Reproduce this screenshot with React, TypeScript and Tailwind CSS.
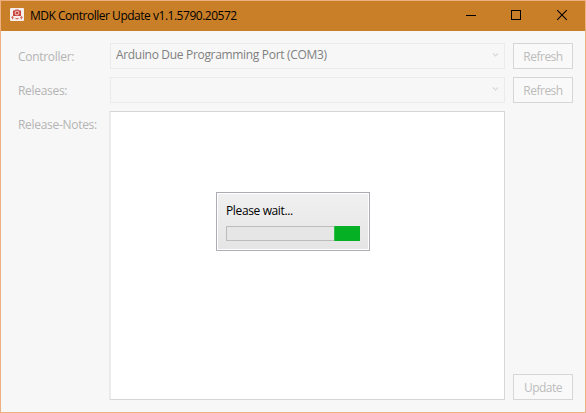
import React from "react";

function Chevron() {
  return (
    <svg width="7" height="6" viewBox="0 0 7 6" fill="none" className="mr-[-1px] mb-0.5 ml-auto shrink-0">
      <path d="M1 1.5 3.5 4 6 1.5" stroke="#dadada" strokeWidth="1.2" />
    </svg>
  );
}

function Label({ children }: { children: React.ReactNode }) {
  return <div className="w-[92px] shrink-0 pt-[6px] tracking-[-0.3px] whitespace-nowrap text-[#b4b4b4]">{children}</div>;
}

function Select({ text }: { text?: string }) {
  return (
    <div className="flex h-[26px] w-[395px] shrink-0 items-center border border-[#ebebeb] bg-[#f7f7f7] pr-[6px] pl-[5px]">
      <span className="-mt-[2px] tracking-[-0.32px] whitespace-nowrap text-[#808080]">{text}</span>
      <Chevron />
    </div>
  );
}

function Button({ children }: { children: React.ReactNode }) {
  return (
    <button className="flex h-[26px] w-[60px] shrink-0 items-center justify-center border border-[#d6d6d6] bg-[#f9f9f9] pt-px tracking-[-0.5px] text-[#bcbcbc]">
      {children}
    </button>
  );
}

function AppIcon() {
  return (
    <svg width="14" height="13" viewBox="0 0 14 13" className="mb-[3px] ml-[9px] shrink-0">
      <rect width="14" height="13" rx="1" fill="#f6efed" />
      <path d="M3 2.5h2l.6-1h2.8l.6 1h2V8H3Z" fill="#c8453f" />
      <circle cx="7" cy="5" r="1.9" fill="#c8453f" stroke="#f4d5d2" strokeWidth=".9" />
      <path d="M1.2 9.3 4 9.8M12.8 9.3 10 9.8M2.6 8v3.2M11.4 8v3.2M5.4 10.6h3.2" fill="none" stroke="#d4706a" strokeWidth="1.1" />
    </svg>
  );
}

export default function App() {
  return (
    <div className="relative flex h-[413px] w-[586px] flex-col overflow-hidden border border-[#ecb083] bg-[#f7f7f7] font-['Open_Sans','Noto_Sans',sans-serif] text-[12px] leading-4">
      <header className="flex h-[30px] shrink-0 items-center bg-[#c97f28] text-black">
        <AppIcon />
        <h1 className="ml-[6px] tracking-[-0.48px] whitespace-nowrap">MDK Controller Update v1.1.5790.20572</h1>
        <svg width="102" height="12" viewBox="0 0 102 12" fill="none" stroke="#000" className="mr-[17px] mb-0.5 ml-auto">
          <path d="M0 6.5h10M45.5 1.5h9v9h-9z" shapeRendering="crispEdges" />
          <path d="m91.2 1.2 9.6 9.6m0-9.6-9.6 9.6" strokeWidth="1.1" />
        </svg>
      </header>
      <main className="flex flex-col gap-2 pt-3 pl-[17px]">
        <div className="flex">
          <Label>Controller:</Label>
          <Select text="Arduino Due Programming Port (COM3)" />
          <div className="ml-2"><Button>Refresh</Button></div>
        </div>
        <div className="flex">
          <Label>Releases:</Label>
          <Select />
          <div className="ml-2"><Button>Refresh</Button></div>
        </div>
        <div className="flex items-stretch">
          <Label>Release-Notes:</Label>
          <div className="-ml-px h-[289px] w-[396px] shrink-0 border border-l-2 border-[#d6d6d6] border-l-[#ebebeb] bg-white" />
          <div className="ml-2 flex items-end"><Button>Update</Button></div>
        </div>
      </main>
      <div className="absolute top-[191px] left-[215px] h-[59px] w-[154px] border border-[#abadb3] bg-white p-px">
        <div className="h-full bg-linear-to-b from-[#f0f0f0] to-[#e5e5e5] px-2 pt-[9px]">
          <p className="tracking-[-0.37px] text-black">Please wait...</p>
          <div className="mt-[7px] flex h-[15px] justify-end border border-r-0 border-[#bcbcbc] bg-[#e6e6e6]">
            <div className="-my-px w-[26px] border-l border-[#32bf4c] bg-[#06b025]" />
          </div>
        </div>
      </div>
    </div>
  );
}
